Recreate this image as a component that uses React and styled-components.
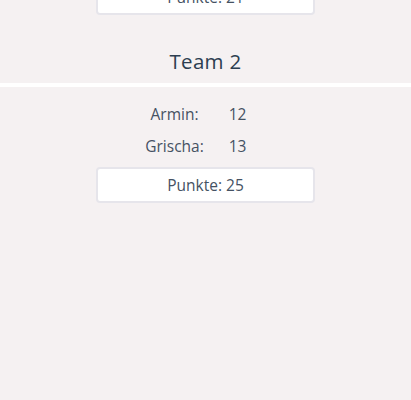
import React from "react";
import styled, { createGlobalStyle } from "styled-components";

const GlobalStyle = createGlobalStyle`
  html, body {
    margin: 0;
    padding: 0;
    background: #f5f1f2;
    font-family: "Open Sans", "Liberation Sans", sans-serif;
    overflow: hidden;
  }
`;

const Page = styled.div`
  width: 411px;
  height: 400px;
  overflow: hidden;
`;

const Scroller = styled.div`
  margin-top: -26px;
`;

const TeamBlock = styled.section`
  display: flex;
  flex-direction: column;
  align-items: center;
`;

const TeamTitle = styled.h2`
  margin: 0;
  height: 42px;
  padding-bottom: 3px;
  box-sizing: border-box;
  display: flex;
  align-items: center;
  justify-content: center;
  font-size: 20.5px;
  font-weight: 500;
  color: #2c3e50;
  letter-spacing: 0.3px;
`;

const Divider = styled.div`
  align-self: stretch;
  height: 4px;
  background: #ffffff;
  margin-bottom: 11px;
`;

const Players = styled.div`
  display: grid;
  grid-template-columns: 64px 62px;
  grid-auto-rows: 32px;
  align-items: center;
  text-align: center;
  font-size: 15.5px;
  color: #455263;
`;

const Cell = styled.div`
  white-space: nowrap;
  display: flex;
  justify-content: center;
`;

const Total = styled.div`
  box-sizing: border-box;
  width: 219px;
  height: 36px;
  margin-top: 5px;
  background: #ffffff;
  border: 2px solid #e6e5eb;
  border-radius: 4px;
  display: flex;
  align-items: center;
  justify-content: center;
  font-size: 15.5px;
  color: #455263;
`;

const Spacer = styled.div`
  height: ${(p) => p.h}px;
`;

const teams = [
  { name: "Team 2", players: [["Armin", 12], ["Grischa", 13]] },
];

function Team({ name, players }) {
  const total = players.reduce((s, [, p]) => s + p, 0);
  return (
    <TeamBlock>
      <TeamTitle>{name}</TeamTitle>
      <Divider />
      <Players>
        {players.map(([n, p]) => (
          <React.Fragment key={n}>
            <Cell>{n}:</Cell>
            <Cell>{p}</Cell>
          </React.Fragment>
        ))}
      </Players>
      <Total>Punkte: {total}</Total>
    </TeamBlock>
  );
}

export default function App() {
  return (
    <Page>
      <GlobalStyle />
      <Scroller>
        <TeamBlock>
          <Total>Punkte: 21</Total>
        </TeamBlock>
        <Spacer h={26} />
        {teams.map((t) => (
          <Team key={t.name} {...t} />
        ))}
      </Scroller>
    </Page>
  );
}
